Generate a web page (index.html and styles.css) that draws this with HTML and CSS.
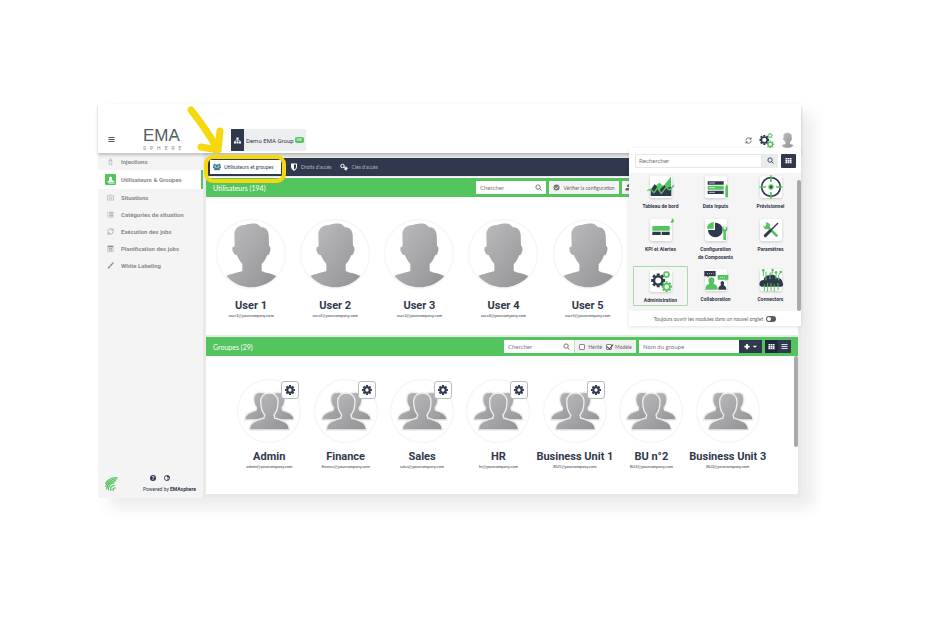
FILE: index.html
```html
<!DOCTYPE html>
<html lang="fr">
<head>
    <meta charset="UTF-8">
    <meta name="viewport" content="width=device-width, initial-scale=1.0">
    <title>EMAsphere - Utilisateurs et groupes</title>
    <link rel="stylesheet" href="styles.css">
</head>
<body>
    <svg class="sprite" aria-hidden="true">
        <defs>
            <linearGradient id="silver" x1="0" y1="0" x2="1" y2="1">
                <stop offset="0" stop-color="#bdbdbf"/>
                <stop offset="1" stop-color="#929295"/>
            </linearGradient>
            <symbol id="person" viewBox="0 0 204 204">
                <path fill="url(#silver)" d="M28 168C45 160 65 158 76 153L76 132C67 122 62 112 60 106C50 104 46 94 46 86C46 80 50 78 53 80L52 40C54 22 70 14 84 15C100 9 118 9 124 14L132 22C146 22 153 30 155 44L156 78C161 78 162 90 158 98C156 105 152 106 150 106C146 118 142 126 134 132L134 153C148 160 165 160 178 168C160 190 130 202 103 202C76 202 46 190 28 168Z"/>
            </symbol>
            <symbol id="team" viewBox="0 0 186 186">
                <g fill="url(#silver)" stroke="#ededee" stroke-width="4">
                    <path d="M20 120C20 102 34 97 54 91L56 84C48 74 46 60 48 50C50 38 64 34 80 39L94 60V120Z"/>
                    <path d="M168 120C168 102 154 97 134 91L132 84C140 74 142 60 140 50C138 38 124 34 108 39L94 60V120Z"/>
                    <path d="M34 150C34 128 50 122 78 114L80 104C72 96 68 80 68 64C68 48 80 39 94 39C108 39 120 48 120 64C120 80 116 96 108 104L110 114C138 122 154 128 154 150Z"/>
                </g>
            </symbol>
            <symbol id="gear" viewBox="0 0 24 24">
                <circle cx="12" cy="12" r="6.5" fill="none" stroke="currentColor" stroke-width="5"/>
                <path fill="none" stroke="currentColor" stroke-width="5" d="M12 0V4M12 20V24M0 12H4M20 12H24M3.5 3.5L6 6M18 18L20.500 20.500M3.500 20.500L6 18M18 6L20.500 3.500"/>
            </symbol>
            <symbol id="gear-thin" viewBox="0 0 24 24">
                <circle cx="12" cy="12" r="7" fill="none" stroke="currentColor" stroke-width="4"/>
                <path fill="none" stroke="currentColor" stroke-width="5" d="M12 0V4M12 20V24M0 12H4M20 12H24M3.500 3.500L6 6M18 18L20.500 20.500M3.500 20.500L6 18M18 6L20.500 3.500"/>
            </symbol>
            <symbol id="gears" viewBox="0 0 48 48">
                <use href="#gear-thin" x="1" y="6" width="32" height="32" color="#30384d"/>
                <use href="#gear-thin" x="27" y="0" width="17" height="17" color="#54c45e"/>
                <use href="#gear-thin" x="24" y="24" width="24" height="24" color="#54c45e"/>
            </symbol>
            <symbol id="search" viewBox="0 0 16 16">
                <path fill="none" stroke="currentColor" stroke-width="2" d="M7 2a5 5 0 1 0 0 10a5 5 0 1 0 0-10M10.500 10.500L15 15"/>
            </symbol>
            <symbol id="refresh" viewBox="0 0 16 16">
                <path fill="none" stroke="currentColor" stroke-width="1.500" d="M2 8a6 6 0 0 1 11-3.500M14 1v4h-4M14 8a6 6 0 0 1-11 3.500M2 15v-4h4"/>
            </symbol>
            <symbol id="grid" viewBox="0 0 16 16">
                <path fill="currentColor" d="M1 2h4v3H1zM6 2h4v3H6zM11 2h4v3h-4zM1 6h4v4H1zM6 6h4v4H6zM11 6h4v4h-4zM1 11h4v3H1zM6 11h4v3H6zM11 11h4v3h-4z"/>
            </symbol>
            <symbol id="bars" viewBox="0 0 16 16">
                <path stroke="currentColor" stroke-width="2" d="M1 3.500H15M1 8H15M1 12.500H15"/>
            </symbol>
        </defs>
    </svg>

    <div class="app">
        <header class="topbar">
            <button class="plain menu" aria-label="Menu"><svg class="icon"><use href="#bars"/></svg></button>
            <div class="logo">
                <span class="logo-name">EMA</span>
                <span class="logo-sub">SPHERE</span>
            </div>
            <button class="company">
                <span class="company-icon">
                    <svg viewBox="0 0 16 16"><path fill="#fff" d="M5.500 1h5v5h-5zM0 10h4.500v5H0zM5.800 10h4.500v5H5.800zM11.500 10H16v5h-4.500z"/><path fill="none" stroke="#fff" d="M8 5V11M2.500 11V8H13.500V11"/></svg>
                </span>
                <span>Demo EMA Group</span>
                <span class="tag">GR</span>
            </button>
            <div class="top-actions">
                <button class="plain" aria-label="Actualiser"><svg class="icon"><use href="#refresh"/></svg></button>
                <button class="plain modules" aria-label="Modules"><svg><use href="#gears"/></svg></button>
                <button class="plain profile" aria-label="Profil"><svg viewBox="20 0 166 204"><use href="#person" width="204" height="204"/></svg></button>
            </div>
        </header>

        <div class="body">
            <nav class="sidebar">
                <a href="#"><svg class="icon" viewBox="0 0 16 16"><path fill="none" stroke="currentColor" d="M5 6h6v9H5zM7 6V2h2v4"/></svg>Injections</a>
                <a href="#" class="active"><span class="square"><svg viewBox="0 0 16 16"><path fill="#fff" d="M1 13q0-3 3-4V4q0-3 3-3t3 3v4q2 0 2 2l3 1v2zM3 14h12v1H3z"/></svg></span>Utilisateurs &amp; Groupes</a>
                <a href="#"><svg class="icon" viewBox="0 0 16 16"><path fill="none" stroke="currentColor" d="M1 4h4l1-2h4l1 2h4v10H1z"/><circle cx="8" cy="9" r="3" fill="none" stroke="currentColor"/></svg>Situations</a>
                <a href="#"><svg class="icon" viewBox="0 0 16 16"><path fill="none" stroke="currentColor" stroke-width="1.500" d="M1 3h2M5 3h10M1 6.500h2M5 6.500h10M1 10h2M5 10h10M1 13.500h2M5 13.500h10"/></svg>Catégories de situation</a>
                <a href="#"><svg class="icon"><use href="#refresh"/></svg>Exécution des jobs</a>
                <a href="#"><svg class="icon" viewBox="0 0 16 16"><path fill="none" stroke="currentColor" d="M2 2h12v13H2zM4 8h8M4 11h8M6 6v8M10 6v8"/><path stroke="currentColor" stroke-width="3" d="M2 3.500h12"/></svg>Planification des jobs</a>
                <a href="#"><svg class="icon" viewBox="0 0 16 16"><path fill="currentColor" d="M15 1q1 1 0 2L9 10L6 8L13 1q1-1 2 0zM5 9l3 2q0 4-7 4q2-1 2-4q0-2 2-2z"/></svg>White Labeling</a>
                <footer class="side-foot">
                    <svg class="leaf" viewBox="0 0 40 44"><g fill="none" stroke="#54c45e" stroke-width="4"><path d="M1 22Q10 2 38 2"/><path d="M1 31Q8 8 38 5"/><path d="M4 39Q8 14 34 11"/><path d="M11 42Q8 22 29 18"/><path d="M19 43Q12 28 30 26"/><path d="M27 43Q20 36 33 34"/></g></svg>
                    <div class="powered">
                        <div class="round-links">
                            <a href="#" aria-label="Aide">?</a>
                            <a href="#" aria-label="Langue" class="globe"><svg viewBox="0 0 16 16"><circle cx="8" cy="8" r="7" fill="none" stroke="currentColor" stroke-width="2"/><path fill="currentColor" d="M6 2h7l2 5h-4L8 5zM7 10h7l-3 4z"/></svg></a>
                        </div>
                        <div>Powered by <b>EMAsphere</b></div>
                    </div>
                </footer>
            </nav>

            <main>
                <div class="tabs">
                    <button class="tab selected"><svg viewBox="0 0 20 18"><g fill="#467f9c"><circle cx="4" cy="4" r="3"/><circle cx="16" cy="4" r="3"/><circle cx="10" cy="6" r="4"/><path d="M0 12V8q0-2 4-1l2 3h8l2-3q4-1 4 1v4h-3v5H3v-5z"/></g></svg>Utilisateurs et groupes</button>
                    <button class="tab"><svg viewBox="0 0 16 16"><path fill="#fff" d="M2 1h12v7q0 5-6 8q-6-3-6-8z"/><path fill="#30384d" d="M8 3h4v5q0 3-4 5z"/></svg>Droits d'accès</button>
                    <button class="tab"><svg viewBox="0 0 16 16"><g fill="none" stroke="#fff" stroke-width="2"><circle cx="5" cy="6" r="3.500"/><path d="M7 8l5 4l3-1M9 13l3-1v3"/><circle cx="12" cy="10" r="2"/></g></svg>Clés d'accès</button>
                </div>

                <section class="users">
                    <div class="bar">
                        <h2>Utilisateurs (194)</h2>
                        <div class="tools">
                            <label class="search"><input type="text" placeholder="Chercher" aria-label="Chercher un utilisateur"><svg><use href="#search"/></svg></label>
                            <button class="check"><svg viewBox="0 0 16 16"><circle cx="8" cy="8" r="7" fill="#777"/><path fill="none" stroke="#fff" stroke-width="2" d="M4 8l3 3l5-5"/></svg>Vérifier la configuration</button>
                            <button class="add-user" aria-label="Ajouter"><svg viewBox="0 0 16 16"><circle cx="8" cy="4" r="3.500" fill="#666"/><path fill="#666" d="M1 15V12q0-3 4-3h6q4 0 4 3v3z"/></svg></button>
                        </div>
                    </div>
                    <div class="cards">
                        <article><div class="avatar"><svg><use href="#person"/></svg></div><h3>User 1</h3><p>user1@yourcompany.com</p></article>
                        <article><div class="avatar"><svg><use href="#person"/></svg></div><h3>User 2</h3><p>user2@yourcompany.com</p></article>
                        <article><div class="avatar"><svg><use href="#person"/></svg></div><h3>User 3</h3><p>user3@yourcompany.com</p></article>
                        <article><div class="avatar"><svg><use href="#person"/></svg></div><h3>User 4</h3><p>user4@yourcompany.com</p></article>
                        <article><div class="avatar"><svg><use href="#person"/></svg></div><h3>User 5</h3><p>user5@yourcompany.com</p></article>
                    </div>
                </section>

                <section class="groups">
                    <div class="bar">
                        <h2>Groupes (29)</h2>
                        <div class="tools">
                            <div class="filter">
                                <label class="search"><input type="text" placeholder="Chercher" aria-label="Chercher un groupe"><svg><use href="#search"/></svg></label>
                                <div class="ticks">
                                    <label><input type="checkbox">Hérité</label>
                                    <label><input type="checkbox" checked>Modèle</label>
                                </div>
                            </div>
                            <div class="new-group">
                                <input type="text" placeholder="Nom du groupe" aria-label="Nom du groupe">
                                <button class="dark" aria-label="Ajouter un groupe"><svg viewBox="0 0 32 16"><path stroke="#fff" stroke-width="4" d="M2 8H14M8 2V14"/><path fill="#fff" d="M21 6h10l-5 5z"/></svg></button>
                            </div>
                            <div class="views">
                                <button class="dark on" aria-label="Grille"><svg><use href="#grid"/></svg></button>
                                <button class="dark" aria-label="Liste"><svg><use href="#bars"/></svg></button>
                            </div>
                        </div>
                    </div>
                    <div class="cards">
                        <article><div class="avatar"><svg><use href="#team"/></svg><button class="edit" aria-label="Modifier"><svg><use href="#gear"/></svg></button></div><h3>Admin</h3><p>admin@yourcompany.com</p></article>
                        <article><div class="avatar"><svg><use href="#team"/></svg><button class="edit" aria-label="Modifier"><svg><use href="#gear"/></svg></button></div><h3>Finance</h3><p>finance@yourcompany.com</p></article>
                        <article><div class="avatar"><svg><use href="#team"/></svg><button class="edit" aria-label="Modifier"><svg><use href="#gear"/></svg></button></div><h3>Sales</h3><p>sales@yourcompany.com</p></article>
                        <article><div class="avatar"><svg><use href="#team"/></svg><button class="edit" aria-label="Modifier"><svg><use href="#gear"/></svg></button></div><h3>HR</h3><p>hr@yourcompany.com</p></article>
                        <article><div class="avatar"><svg><use href="#team"/></svg><button class="edit" aria-label="Modifier"><svg><use href="#gear"/></svg></button></div><h3>Business Unit 1</h3><p>BU1@yourcompany.com</p></article>
                        <article><div class="avatar"><svg><use href="#team"/></svg></div><h3>BU n°2</h3><p>BU2@yourcompany.com</p></article>
                        <article><div class="avatar"><svg><use href="#team"/></svg></div><h3>Business Unit 3</h3><p>BU3@yourcompany.com</p></article>
                    </div>
                    <div class="thumb"></div>
                </section>
            </main>
        </div>

        <!-- modules menu -->
        <div class="popup">
            <div class="popup-head">
                <input type="text" placeholder="Rechercher" aria-label="Rechercher un module">
                <button class="find" aria-label="Rechercher"><svg><use href="#search"/></svg></button>
                <button class="dark" aria-label="Affichage"><svg><use href="#grid"/></svg></button>
            </div>
            <div class="module-grid">
                <a href="#"><span class="tile"><svg viewBox="0 0 90 66"><path fill="#54c45e" d="M14 40L40 20L52 30L75 2V40z"/><path fill="#30384d" d="M14 60V42L26 24L40 42L55 28L62 36L76 32V60z"/><path fill="none" stroke="#54c45e" stroke-width="4" d="M4 44L14 40L24 50L34 36L46 52L60 34L70 42L84 28"/></svg></span>Tableau de bord</a>
                <a href="#"><span class="tile"><svg viewBox="0 0 90 66"><path fill="#30384d" d="M20 16h48v10H20zM20 44h48v10H20z"/><path fill="#54c45e" d="M20 29h48v12H20zM73 32l4-8l4 8v32h-8z"/><path stroke="#fff" stroke-width="2" d="M24 21h18M24 35h18M24 49h18"/></svg></span>Data Inputs</a>
                <a href="#"><span class="tile"><svg viewBox="0 0 90 66"><circle cx="45" cy="33" r="28" fill="none" stroke="#30384d" stroke-width="5"/><circle cx="45" cy="33" r="6" fill="#30384d" stroke="#54c45e" stroke-width="4"/><path stroke="#54c45e" stroke-width="5" d="M45-2V18M45 48V68M10 33H30M60 33H80"/></svg></span>Prévisionnel</a>
                <a href="#"><span class="tile"><svg viewBox="0 0 90 66"><path fill="#54c45e" d="M19 21h52v14H19zM75 8l4-10q8 8 3 12q-6 4-9-1z"/><path fill="#30384d" d="M19 38h25v10H19zM47 38h24v10H47z"/></svg></span>KPI et Alertes</a>
                <a href="#"><span class="tile"><svg viewBox="0 0 90 66"><path fill="#30384d" d="M42 11V33H21A22 22 0 1 0 42 11z"/><path fill="#54c45e" d="M38 9V29H18Q19 11 38 9z"/><path fill="#54c45e" d="M68 22v9h6v-9q7 4 5 11l-4 5v25h-8V38q-9-10 1-16z"/></svg></span>Configuration<br>de Composants</a>
                <a href="#"><span class="tile"><svg viewBox="0 0 90 66"><path stroke="#54c45e" stroke-width="8" d="M30 18L64 52"/><path fill="#54c45e" d="M22 20l7 4l5-5l-6-8q12-2 14 8q0 11-10 12q-10-1-10-11z"/><path stroke="#30384d" stroke-width="4" d="M66 12L40 38"/><path stroke="#30384d" stroke-width="9" stroke-linecap="round" d="M42 36L28 50"/></svg></span>Paramètres</a>
                <a href="#" class="current"><span class="tile"><svg viewBox="0 0 90 66"><use href="#gears" x="14" y="2" width="64" height="64"/></svg></span>Administration</a>
                <a href="#"><span class="tile"><svg viewBox="0 0 90 66"><path fill="#30384d" d="M10 6h34v16H24l-4 5v-5H10zM52 62q0-10 8-13q-4-12 4-13q8 1 4 13q8 3 8 13z"/><path fill="#54c45e" d="M50 18h32v14h-6v5l-5-5H50zM13 62q0-16 12-17q-8-20 6-20q14 0 7 20q12 1 12 17z"/><path stroke="#fff" stroke-width="2" stroke-dasharray="3 3" d="M18 14h20M57 25h18"/></svg></span>Collaboration</a>
                <a href="#"><span class="tile"><svg viewBox="0 0 90 66"><path fill="#30384d" d="M16 53Q8 50 11 41Q13 33 23 33Q25 19 39 19Q54 12 62 26Q77 26 79 38Q85 50 76 53z"/><path fill="none" stroke="#54c45e" stroke-width="3" d="M25 66V46M35 68V42M45 66V42M55 68V46M66 64V42M30 34V8M22 22V4M42 30V12h8V4M60 30V12M68 34V18l6-8"/><g fill="#54c45e"><circle cx="22" cy="4" r="4"/><circle cx="50" cy="3" r="4"/><circle cx="60" cy="10" r="4"/><circle cx="74" cy="9" r="4"/></g></svg></span>Connectors</a>
            </div>
            <div class="popup-foot">
                <label for="new-tab">Toujours ouvrir les modules dans un nouvel onglet</label>
                <input type="checkbox" id="new-tab">
            </div>
            <div class="thumb"></div>
        </div>

        <!-- highlight on the first tab -->
        <div class="highlight"></div>
        <svg class="arrow" viewBox="0 0 44 56"><path fill="none" stroke="#f5d80d" stroke-width="7" stroke-linecap="round" stroke-linejoin="round" d="M8 6Q24 26 35 46M18 43L35 46L37 27"/></svg>
    </div>
</body>
</html>
```

FILE: styles.css
```css
* {
    box-sizing: border-box;
}
body {
    margin: 0;
    padding: 104px 126px 40px 98px;
    background-color: #fff;
    font-family: Roboto, sans-serif;
    font-size: 6px;
    color: #30384d;
}
h2, h3, p {
    margin: 0;
}
a {
    color: inherit;
    text-decoration: none;
}
button, input {
    font-family: inherit;
    font-size: inherit;
    color: inherit;
    border: none;
    border-radius: 0;
    padding: 0;
    margin: 0;
    min-width: 0;
}
svg {
    display: block;
    flex: none;
    overflow: visible;
}
.sprite {
    position: absolute;
    width: 0;
    height: 0;
}
.icon {
    width: 7px;
    height: 7px;
}
.plain {
    background: none;
}
.app {
    position: relative;
    background-color: #e9e9e9;
    box-shadow: 12px 10px 14px rgba(0, 0, 0, 0.08);
}

/* top bar */
.topbar {
    position: relative;
    display: flex;
    align-items: flex-end;
    height: 49px;
    padding: 0 7px 2px 10px;
    background-color: #fff;
    box-shadow: 0 2px 3px rgba(0, 0, 0, 0.22);
}
.menu {
    padding: 0 0 8px;
}
.logo {
    display: flex;
    flex-direction: column;
    width: 48px;
    margin-left: 28px;
    color: #555b61;
}
.logo-name {
    position: relative;
    font-family: "Liberation Sans", sans-serif;
    font-size: 17px;
    line-height: 19px;
}
.logo-name::after {
    content: "";
    position: absolute;
    left: 29px;
    top: 11px;
    width: 6px;
    height: 1px;
    background-color: #54c45e;
}
.logo-sub {
    font-size: 5px;
    line-height: 6px;
    letter-spacing: 4px;
    color: #888;
}
.company {
    display: flex;
    align-items: center;
    gap: 1px;
    height: 22px;
    margin-left: 40px;
    padding-right: 2px;
    background-color: #eceef0;
}
.company-icon {
    display: flex;
    align-items: center;
    justify-content: center;
    width: 13px;
    height: 22px;
    margin-right: 1px;
    background-color: #30384d;
}
.company-icon svg {
    width: 7px;
    height: 7px;
}
.tag {
    padding: 0 2px;
    border-radius: 2px;
    background-color: #54c45e;
    color: #fff;
    font-size: 4px;
    line-height: 6px;
}
.top-actions {
    display: flex;
    align-items: center;
    gap: 7px;
    height: 22px;
    margin-left: auto;
}
.modules svg {
    width: 15px;
    height: 15px;
}
.profile svg {
    width: 13px;
    height: 16px;
}

/* sidebar */
.body {
    display: flex;
}
.sidebar {
    display: flex;
    flex-direction: column;
    width: 105px;
    flex: none;
    background-color: #f4f4f4;
    color: #888b90;
    font-weight: 700;
}
.sidebar > a {
    display: flex;
    align-items: center;
    gap: 7px;
    height: 17px;
    padding-left: 9px;
}
.sidebar > .active {
    gap: 5px;
    height: 19px;
    padding-left: 7px;
    background-color: #fff;
    border-right: 2px solid #54c45e;
}
.square {
    display: flex;
    align-items: center;
    justify-content: center;
    width: 11px;
    height: 11px;
    border-radius: 1px;
    background-color: #54c45e;
}
.square svg {
    width: 8px;
    height: 8px;
}
.side-foot {
    display: flex;
    align-items: center;
    justify-content: space-between;
    margin-top: auto;
    padding: 0 7px 6px;
    color: #30384d;
    font-weight: 400;
    font-size: 5px;
}
.leaf {
    width: 13px;
    height: 14px;
}
.powered {
    text-align: right;
}
.round-links {
    display: flex;
    gap: 8px;
    padding: 0 0 5px 7px;
}
.round-links a {
    width: 6px;
    height: 6px;
    border-radius: 50%;
    background-color: #30384d;
    color: #fff;
    font-weight: 700;
    line-height: 6px;
    text-align: center;
}
.round-links .globe {
    background: none;
    color: #30384d;
}

/* content */
main {
    flex: 1;
    min-width: 0;
    padding: 5px 3px 4px;
}
.tabs {
    display: flex;
    align-items: center;
    gap: 9px;
    height: 18px;
    padding: 0 4px;
    background-color: #30384d;
    font-family: Lato, sans-serif;
    font-size: 5px;
}
.tab {
    display: flex;
    align-items: center;
    gap: 3px;
    height: 14px;
    background: none;
    color: #b5b8c0;
}
.tab svg {
    width: 8px;
    height: 8px;
}
.tab.selected {
    width: 71px;
    padding: 0 3px;
    background-color: #fff;
    color: #30384d;
}
.bar {
    display: flex;
    align-items: center;
    justify-content: space-between;
    height: 19px;
    padding: 0 7px;
    background-color: #54c45e;
    color: #fff;
    font-family: Lato, sans-serif;
}
.bar h2 {
    font-size: 7px;
    font-weight: 400;
}
.users {
    margin-top: 1px;
    border-top: 1px solid #fff;
    background-color: #fff;
}
.groups {
    position: relative;
    margin-top: 2px;
    background-color: #fff;
}
.tools {
    display: flex;
    gap: 3px;
    color: #666;
}
.tools svg {
    width: 7px;
    height: 7px;
}
.tools input::placeholder, .popup input::placeholder {
    color: #777;
}
.search {
    display: flex;
    align-items: center;
    width: 70px;
    height: 13px;
    padding: 0 4px;
    background-color: #fff;
}
.search input {
    flex: 1;
    outline: none;
}
.check, .add-user {
    display: flex;
    align-items: center;
    justify-content: center;
    gap: 3px;
    width: 70px;
    height: 13px;
    background-color: #f4f4f4;
    font-size: 5px;
    white-space: nowrap;
}
.add-user {
    justify-content: flex-start;
    width: 19px;
    padding-left: 3px;
}
.users .tools {
    margin-right: 150px;
}
.filter, .new-group, .views {
    display: flex;
}
.ticks {
    display: flex;
    align-items: center;
    justify-content: center;
    gap: 4px;
    width: 62px;
    height: 13px;
    background-color: #f1f1f1;
    border-left: 1px solid #b9e4bd;
    font-size: 5px;
}
.ticks label {
    display: flex;
    align-items: center;
    gap: 3px;
}
.ticks input {
    appearance: none;
    position: relative;
    width: 6px;
    height: 6px;
    border: 1px solid #888;
    border-radius: 1px;
    background-color: #fff;
}
.ticks input:checked::after {
    content: "";
    position: absolute;
    left: 1px;
    top: -2px;
    width: 3px;
    height: 5px;
    border: solid #444;
    border-width: 0 1px 1px 0;
    transform: rotate(40deg);
}
.new-group input {
    width: 100px;
    height: 13px;
    padding: 0 4px;
    background-color: #fff;
}
.dark {
    display: flex;
    align-items: center;
    justify-content: center;
    width: 13px;
    height: 13px;
    background-color: #30384d;
    color: #fff;
}
.dark.on {
    background-color: #20283b;
}
.new-group .dark {
    width: 23px;
}
.new-group svg {
    width: 15px;
    height: 7px;
}

/* cards */
.cards {
    display: grid;
    grid-template-columns: repeat(7, 1fr);
    text-align: center;
}
.users .cards {
    height: 138px;
    padding: 23px 0 0 3px;
}
.groups .cards {
    height: 138px;
    padding: 24px 32px 0 25px;
}
.cards article {
    display: flex;
    flex-direction: column;
    align-items: center;
    min-width: 0;
    white-space: nowrap;
}
.avatar {
    position: relative;
    width: 68px;
    height: 68px;
    border-radius: 50%;
    background-color: #fff;
    box-shadow: 0 0 2px rgba(0, 0, 0, 0.14);
}
.avatar > svg {
    width: 100%;
    height: 100%;
}
.groups .avatar {
    width: 62px;
    height: 62px;
}
.cards h3 {
    margin-top: 11px;
    font-size: 11px;
    line-height: 13px;
}
.groups .cards h3 {
    margin-top: 8px;
}
.cards p {
    margin-top: 1px;
    font-family: Lato, sans-serif;
    font-size: 4px;
    line-height: 6px;
}
.edit {
    position: absolute;
    top: 1px;
    right: 1px;
    display: flex;
    align-items: center;
    justify-content: center;
    width: 18px;
    height: 18px;
    border: 1px solid #bbb;
    border-radius: 3px;
    background-color: #fff;
}
.edit svg {
    width: 10px;
    height: 10px;
}
.thumb {
    position: absolute;
    right: 0;
    top: 19px;
    width: 4px;
    height: 91px;
    border-radius: 2px;
    background-color: #a9a9ab;
}

/* modules popup */
.popup {
    position: absolute;
    top: 44px;
    right: 0;
    width: 172px;
    background-color: #fff;
    box-shadow: 0 1px 4px rgba(0, 0, 0, 0.12);
}
.popup-head {
    display: flex;
    align-items: center;
    height: 25px;
    padding: 0 5px 0 6px;
}
.popup-head input {
    flex: 1;
    height: 14px;
    padding: 0 3px;
    border: 1px solid #e4e7ea;
}
.popup-head svg {
    width: 7px;
    height: 7px;
}
.find {
    display: flex;
    align-items: center;
    justify-content: center;
    width: 16px;
    height: 14px;
    margin-right: 3px;
    background-color: #e9ecef;
}
.popup-head .dark {
    width: 15px;
    height: 14px;
    border-radius: 1px;
}
.module-grid {
    display: grid;
    grid-template-columns: repeat(3, 1fr);
    grid-template-rows: 43px 50px 45px;
    padding: 0 3px 0 4px;
    background-color: #f5f5f5;
    font-size: 5px;
    font-weight: 700;
    line-height: 8px;
    text-align: center;
}
.module-grid a {
    display: flex;
    flex-direction: column;
    align-items: center;
    gap: 4px;
    padding-top: 3px;
}
.tile {
    display: flex;
    justify-content: center;
    width: 22px;
    height: 22px;
    border-radius: 2px;
    background-color: #fff;
    box-shadow: 0 1px 3px rgba(0, 0, 0, 0.18);
}
.tile svg {
    width: 30px;
    height: 22px;
}
.module-grid .current {
    height: 40px;
    border: 1px solid #a5dcaa;
    border-radius: 1px;
}
.popup-foot {
    display: flex;
    align-items: center;
    justify-content: center;
    gap: 3px;
    height: 15px;
    font-family: Lato, sans-serif;
    font-size: 5px;
    color: #666;
}
.popup-foot input {
    appearance: none;
    position: relative;
    width: 10px;
    height: 6px;
    border-radius: 3px;
    background-color: #555a66;
}
.popup-foot input::after {
    content: "";
    position: absolute;
    left: 1px;
    top: 1px;
    width: 4px;
    height: 4px;
    border-radius: 50%;
    background-color: #fff;
}
.popup .thumb {
    top: 32px;
    height: 131px;
}

/* highlight */
.highlight {
    position: absolute;
    left: 106px;
    top: 51px;
    width: 82px;
    height: 28px;
    border: 4px solid #f5d80d;
    border-radius: 9px;
    pointer-events: none;
}
.arrow {
    position: absolute;
    left: 85px;
    top: 0;
    width: 44px;
    height: 56px;
    pointer-events: none;
}
```
